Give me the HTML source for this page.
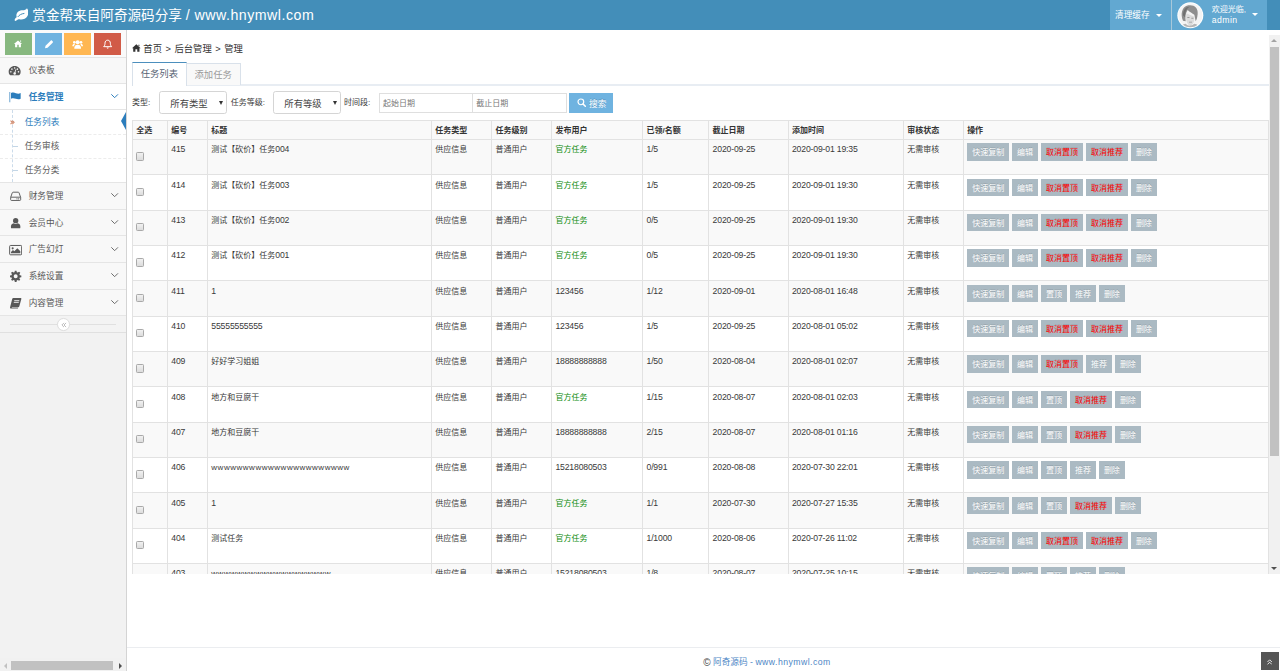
<!DOCTYPE html>
<html lang="zh-CN">
<head>
<meta charset="utf-8">
<title>赏金帮来自阿奇源码分享</title>
<style>
*{box-sizing:border-box}
html,body{margin:0;padding:0;background:#fff;overflow:hidden}
body{font-family:"Liberation Sans","Noto Sans CJK SC",sans-serif;font-size:13px;color:#393939;line-height:1.5}
#z{position:absolute;left:0;top:0;width:1920px;height:1007px;zoom:0.666667;overflow:hidden;background:#fff}
a{text-decoration:none;color:inherit}
svg{display:block}
/* navbar */
.navbar{position:absolute;left:0;top:0;width:1920px;height:45px;background:#438eb9}
.brand{position:absolute;left:20px;top:0;height:45px;line-height:45px;color:#fff;font-size:20.4px;white-space:nowrap}
.brand svg{position:absolute;left:0.5px;top:11.5px}
.brand span{position:absolute;left:28.500px;top:0}
.brand span i{font-style:normal;letter-spacing:.75px;font-size:21.300px}
.ace-nav{position:absolute;right:20px;top:0;height:45px;margin:0;padding:0;list-style:none;display:flex}
.ace-nav li{height:45px;line-height:45px;background:#62a8d1;color:#fff;position:relative;white-space:nowrap}
.ace-nav li+li{border-left:2.5px solid rgba(225,225,225,.55)}
.caret{display:inline-block;width:0;height:0;border-left:5px solid transparent;border-right:5px solid transparent;border-top:5.5px solid #fff;vertical-align:middle}
/* sidebar */
.sidebar{position:absolute;left:0;top:45px;width:190px;height:962px;background:#f2f2f2;border-right:1px solid #d4d4d4}
.shortcuts{height:40px;background:#fafafa;position:relative}
.shortcuts b{position:absolute;top:5px;width:40.8px;height:32px}
.shortcuts b svg{position:absolute;left:12px;top:8px}
.nav-list{margin:0;padding:0;list-style:none}
.nav-list>li{border-top:1px solid #e5e5e5;position:relative}
.nav-list>li>a{display:block;height:38.5px;line-height:39px;background:#f8f8f8;color:#585858;font-size:13px;position:relative;padding-left:43px}
.nav-list>li>a svg.mi{position:absolute;left:13px;top:11px}
.nav-list>li>a svg.ar{position:absolute;right:10px;top:14px}
.nav-list>li:first-child>a{height:37.5px;line-height:37px}
.nav-list>li:first-child>a svg.mi{top:10.5px;left:12px}
.nav-list>li.active>a{background:#fff;color:#2b7dbc;font-weight:bold}
.submenu{margin:0;padding:0;list-style:none;background:#fff;border-top:1px solid #e5e5e5;position:relative}
.submenu:before{content:"";position:absolute;left:18px;top:0;bottom:0;border-left:1px dashed #cbdbea}
.submenu li{position:relative}
.submenu li+li{border-top:1px dashed #ececec}
.submenu li a{display:block;padding:7.5px 0 8.5px 37px;color:#616161;line-height:19px;height:34.5px}
.submenu li:first-child a{height:35.5px;padding-top:9px}
.submenu li:before{content:"";position:absolute;left:20px;top:17px;width:7px;border-top:1px solid #c3d6e6}
.submenu li.active a{color:#2b7dbc}
.submenu li.active:before{display:none}
.tri{position:absolute;right:0;top:3px;width:0;height:0;border-top:14px solid transparent;border-bottom:14px solid transparent;border-right:8px solid #2b7dbc}
.toggle{border-top:1px solid #e5e5e5;border-bottom:1px solid #e0e0e0;background:#f3f3f3;height:24px;box-sizing:content-box;position:relative}
.toggle:before{content:"";position:absolute;left:15px;right:15px;top:12px;border-top:1px solid #e0e0e0}
.toggle i{position:absolute;left:85.5px;top:3px;width:19px;height:19px;border-radius:50%;border:1px solid #ddd;background:#fff}
.toggle i svg{position:absolute;left:4px;top:4px}
.hs{position:absolute;left:0;right:0;bottom:0;height:20px;background:#f1f1f1}
.hs u{position:absolute;left:17px;top:4px;width:153px;height:14px;background:#c1c1c1}
.hs:before{content:"";position:absolute;left:6px;top:7px;border-top:4.5px solid transparent;border-bottom:4.5px solid transparent;border-right:5px solid #c1c1c1}
.hs:after{content:"";position:absolute;right:6px;top:7px;border-top:4.5px solid transparent;border-bottom:4.5px solid transparent;border-left:5px solid #505050}
/* iframe */
.frame{position:absolute;left:191px;top:52px;width:1729px;height:809px;overflow:hidden;background:#fff}
.vs{position:absolute;right:0;top:0;width:17px;height:809px;background:#f1f1f1}
.vs u{position:absolute;left:2px;top:18.5px;width:13px;height:613px;background:#c1c1c1}
.vs:before{content:"";position:absolute;left:4px;top:6px;border-left:4.5px solid transparent;border-right:4.5px solid transparent;border-bottom:5px solid #a3a3a3}
.vs:after{content:"";position:absolute;left:4px;bottom:6px;border-left:4.5px solid transparent;border-right:4.5px solid transparent;border-top:5px solid #505050}
.bc{position:absolute;left:7px;top:11px;word-spacing:1.4px;font-size:14px;line-height:22px;color:#333;white-space:nowrap;padding-left:17px}
.bc svg{position:absolute;left:0;top:3.5px}
.tabs{position:absolute;left:7px;top:41px;right:17px;height:36.5px;border-bottom:3px solid #e8edf3}
.tabs a{position:absolute;top:0;height:35px;font-size:14px;text-align:center;white-space:nowrap}
.tabs a.on{left:0;width:82px;height:36.5px;background:#fff;border:1px solid #d9e1ea;border-top:2px solid #4c8fbd;border-bottom:0;color:#576373;line-height:34px}
.tabs a.off{left:82px;top:1px;width:81px;height:33px;background:#f9f9f9;border:1px solid #d9e1ea;border-left:0;border-bottom:0;color:#999;line-height:34px}
.flt{position:absolute;left:7px;top:85px;height:34px;white-space:nowrap}
.flt span{position:absolute;top:7px;font-size:12px;line-height:20px;color:#393939}
.sel{position:absolute;top:0;width:103px;height:34px;border:1px solid #d5d5d5;border-radius:4px;background:#fff;font-size:14px;color:#444;line-height:32px;padding:3px 0 0 16px}
.sel:after{content:"";position:absolute;right:5px;top:13px;border-left:3.5px solid transparent;border-right:3.5px solid transparent;border-top:7px solid #333}
.inp{position:absolute;top:2px;width:141px;height:30px;border:1px solid #dfdfdf;background:#fff;font-size:12px;color:#777;line-height:28px;padding:1.5px 0 0 5px}
.sbtn{position:absolute;top:2px;left:655px;width:66px;height:30px;background:#6fb3e0;color:#fff;font-size:13px;line-height:30px;padding:1.5px 0 0 30.500px;text-shadow:0 -1px 0 rgba(0,0,0,.18)}
.sbtn svg{position:absolute;left:12px;top:7.5px}
table{position:absolute;left:7px;top:128px;width:1705px;border-collapse:collapse;table-layout:fixed;font-size:12px;color:#393939}
th,td{border:1px solid #e2e2e2;padding:5px;text-align:left;vertical-align:top;line-height:20px;white-space:nowrap;overflow:hidden}
th{padding:6px 5px 2px;line-height:19px;height:28px;font-weight:bold;color:#333;background:#f9f9f9}
tbody tr{height:53px}
tbody tr:nth-child(odd) td{background:#f9f9f9}
td.c{vertical-align:middle}
td.g{color:#0c8c0c}
td.n,td span.n{font-size:13px;letter-spacing:-.25px}
td.w{letter-spacing:.78px}
.cb{display:block;width:12px;height:12.5px;border:1px solid #a9a9a9;border-radius:2px;background:linear-gradient(#f1f1f1,#dcdcdc);margin:-2px 0 0 -0.5px}
td.o{padding:5px 5px 0 5px;font-size:0}
.b{display:inline-block;height:26px;line-height:30px;overflow:hidden;padding:0 7.6px;margin-right:4.2px;background:#abbac3;color:#fff;font-size:12px;text-shadow:0 -1px 0 rgba(0,0,0,.15);vertical-align:top}
.b.r{color:#f00}
/* footer */
.footer{position:absolute;left:191px;top:970px;width:1729px;height:37px;border-top:1px solid #ebedf0;background:#fff}
.footer p{position:absolute;left:190px;right:0;top:0;margin:0;text-align:center;font-size:13px;line-height:44px;color:#4d86c5;white-space:nowrap}
.footer p em{font-style:normal;color:#444;font-size:15px;vertical-align:-1px}
.up{position:absolute;right:2px;bottom:2.5px;width:27px;height:26px;background:#4c4c4c;opacity:.95}
.up svg{position:absolute;left:9.500px;top:9.500px}
</style>
</head>
<body>
<div id="z">

<div class="navbar">
  <a class="brand"><svg width="22" height="20" viewBox="0 0 22 20"><path fill="#fff" d="M1 18.500c-.200-2 1.300-3.700 3-4.800C2 7.500 7.500 3.500 13 3.500c3 0 5-1 6.500-3.200 2.800 3.700 2.800 8.500.5 12-2.500 4-7.300 5.600-11.800 4.600-1.500-.300-2.500 0-3.500 1.200C3.700 19.300 1.200 20 1 18.500z"/><path fill="none" stroke="#438eb9" stroke-width="1.500" stroke-linecap="round" d="M6 13c2-2.700 5-4.300 9-4.800"/></svg><span>赏金帮来自阿奇源码分享 <i>/</i> <i style="margin-left:1px">www.hnymwl.com</i></span></a>
  <ul class="ace-nav">
    <li style="width:91.5px;padding-left:7px;font-size:13px">清理缓存<span class="caret" style="margin-left:9px"></span></li>
    <li style="width:143px"><svg style="position:absolute;left:7px;top:3px" width="40" height="40" viewBox="0 0 40 40"><defs><clipPath id="av"><circle cx="20" cy="20" r="18"/></clipPath><filter id="bl" x="-10%" y="-10%" width="120%" height="120%"><feGaussianBlur stdDeviation="0.9"/></filter></defs><circle cx="20" cy="20" r="19.500" fill="#fff"/><g clip-path="url(#av)"><rect width="40" height="40" fill="#f4f4f4"/><g filter="url(#bl)"><path fill="#8e8e8e" d="M9 28c-4-9-2-21 8-23 8-1.500 15 3 14 13-.400 4-1 8-3 11l-2-10c-3-2-7-4-10-7-3 4-4 10-3 17z"/><path fill="#dcdcdc" d="M14 17c3 1.500 8 3.500 12 5 .500 6-1.500 12-6 14-5-2-7.500-9-6-19z"/><path fill="#b5b5b5" d="M3 40c2-5 6-6.500 10-7.500 3 4 9 4 13 0 4 1 8 2.500 10 7.500z"/><path fill="#9a9a9a" d="M15.500 22.500h3.200v1.500h-3.200zM21.500 23.500h3.200v1.500h-3.200zM18 29.500h4.500v1.200H18z"/><path fill="#6f6f6f" d="M9 20c0-8 4-13 10-13-5 3-7 8-7 16z"/></g></g></svg><span style="position:absolute;left:59px;top:8px;line-height:15px;font-size:13px"><small style="display:block;font-size:12px">欢迎光临,</small><i style="font-style:normal;letter-spacing:.7px">admin</i></span><span class="caret" style="position:absolute;left:119px;top:20px"></span></li>
  </ul>
</div>

<div class="sidebar">
  <div class="shortcuts">
    <b style="left:7.2px;background:#87b87f"><svg style="left:13px;top:9px" width="15" height="14" viewBox="0 0 17 16"><path fill="#fff" d="M8.500 2.500L1.500 8.500h2V14h3.700v-4h2.600v4h3.700V8.500h2zM12 2.500h1.800v3l-1.800-1.600z"/></svg></b>
    <b style="left:52.2px;background:#6fb3e0"><svg width="17" height="16" viewBox="0 0 17 16"><path fill="#fff" d="M3 14l.800-3.800 7.700-7.700c.600-.600 1.400-.600 2 0l1 1c.600.600.600 1.400 0 2L6.800 13.200z"/></svg></b>
    <b style="left:96px;background:#ffb752"><svg width="17" height="16" viewBox="0 0 17 16"><circle cx="8.500" cy="5" r="3" fill="#fff"/><circle cx="3.500" cy="5" r="2" fill="#fff"/><circle cx="13.500" cy="5" r="2" fill="#fff"/><path fill="#fff" d="M3.500 14.500c-.500-3.500 1.500-6 5-6s5.500 2.500 5 6zM.500 11c0-2.500 1-4 3-4l1 1c-1 1-1.500 2-1.500 3zM16.500 11c0-2.500-1-4-3-4l-1 1c1 1 1.500 2 1.500 3z"/></svg></b>
    <b style="left:141px;background:#d15b47"><svg width="17" height="16" viewBox="0 0 17 16"><path fill="none" stroke="#fff" stroke-width="1.500" d="M8.500 1.800c-2.700 0-4 2-4 4.500 0 2.500-.700 4-2 5.200h12c-1.300-1.200-2-2.700-2-5.200 0-2.500-1.300-4.500-4-4.500z"/><path fill="#fff" d="M7 12.800h3c0 1-.700 1.700-1.500 1.700S7 13.800 7 12.800z"/></svg></b>
  </div>
  <ul class="nav-list">
    <li><a><svg class="mi" width="20" height="18" viewBox="0 0 20 18"><path fill="#585858" d="M10 1.500c-5 0-9 3.800-9 8.500 0 1.800.500 3.400 1.500 4.800.200.400.600.700 1 .700h13c.400 0 .800-.300 1-.700 1-1.400 1.500-3 1.500-4.800 0-4.700-4-8.500-9-8.500z"/><circle cx="4.300" cy="10.300" r="1.150" fill="#f8f8f8"/><circle cx="5.900" cy="6.200" r="1.150" fill="#f8f8f8"/><circle cx="10" cy="4.400" r="1.150" fill="#f8f8f8"/><circle cx="14.100" cy="6.200" r="1.150" fill="#f8f8f8"/><circle cx="15.700" cy="10.300" r="1.150" fill="#f8f8f8"/><path stroke="#f8f8f8" stroke-width="1.300" stroke-linecap="round" d="M10 12.600l1.700-5.600"/><circle cx="10" cy="12.800" r="1.900" fill="#f8f8f8"/></svg>仪表板</a></li>
    <li class="active"><a><svg class="mi" width="20" height="18" viewBox="0 0 20 18"><path fill="#2b7dbc" opacity=".75" d="M.500 1.500h1.400v15.500H.500z"/><path fill="#2b7dbc" d="M3 3c2.800-1.200 5-.700 7.300.200s4.500 1.200 7.200-.200v8.500c-2.700 1.400-5 1.100-7.200.200S5.800 10.300 3 11.500z"/></svg>任务管理<svg class="ar" width="14" height="10" viewBox="0 0 14 10"><path fill="none" stroke="#2b7dbc" stroke-width="1.500" d="M2 2l5 5 5-5"/></svg></a>
      <ul class="submenu">
        <li class="active"><a><svg style="position:absolute;left:15px;top:14.5px" width="7" height="7" viewBox="0 0 9 9"><path fill="none" stroke="#d28a6c" stroke-width="2" d="M1 1l3.500 3.500L1 8M4.500 1L8 4.500 4.500 8"/></svg>任务列表</a><span class="tri"></span></li>
        <li><a>任务审核</a></li>
        <li><a>任务分类</a></li>
      </ul>
    </li>
    <li><a><svg class="mi" width="20" height="18" viewBox="0 0 20 18"><path fill="none" stroke="#585858" stroke-width="1.400" d="M2.500 11.200l2.400-7c.200-.500.600-.900 1.200-.900h7.800c.600 0 1 .400 1.200.900l2.400 7v3.300c0 .700-.500 1.200-1.200 1.200H3.700c-.700 0-1.200-.500-1.200-1.200zM2.500 10.800h15"/><circle cx="14.500" cy="13.300" r=".900" fill="#585858"/><circle cx="12" cy="13.300" r=".900" fill="#585858"/></svg>财务管理<svg class="ar" width="14" height="10" viewBox="0 0 14 10"><path fill="none" stroke="#6a6a6a" stroke-width="1.500" d="M2 2l5 5 5-5"/></svg></a></li>
    <li><a><svg class="mi" width="20" height="18" viewBox="0 0 20 18"><circle cx="10" cy="5.500" r="4" fill="#585858"/><path fill="#585858" d="M3 16.500c-.800-4.500 1.500-7 4-7.200 1.800 1.400 4.200 1.400 6 0 2.500.200 4.800 2.700 4 7.200-.200.500-.600.500-1 .500H4c-.400 0-.800 0-1-.500z"/></svg>会员中心<svg class="ar" width="14" height="10" viewBox="0 0 14 10"><path fill="none" stroke="#6a6a6a" stroke-width="1.500" d="M2 2l5 5 5-5"/></svg></a></li>
    <li><a><svg class="mi" width="20" height="18" viewBox="0 0 20 18"><rect x="1" y="2.200" width="18" height="14" rx="1.300" fill="none" stroke="#585858" stroke-width="1.500"/><circle cx="5.500" cy="6.500" r="1.600" fill="#585858"/><path fill="#585858" d="M3 14v-2l3-3 2 2 4.500-4.500L17 11v3z"/></svg>广告幻灯<svg class="ar" width="14" height="10" viewBox="0 0 14 10"><path fill="none" stroke="#6a6a6a" stroke-width="1.500" d="M2 2l5 5 5-5"/></svg></a></li>
    <li><a><svg class="mi" width="20" height="18" viewBox="0 0 20 18"><path fill="#585858" fill-rule="evenodd" d="M8.700 1h2.600l.400 2.200 1.500.600 1.900-1.300 1.800 1.800-1.300 1.900.600 1.500 2.300.400v2.600l-2.300.400-.600 1.500 1.300 1.900-1.800 1.800-1.900-1.300-1.500.600-.400 2.300H8.700l-.400-2.300-1.500-.600-1.900 1.300-1.800-1.800 1.300-1.900-.600-1.500L1.500 10.700V8.100l2.300-.400.600-1.500-1.300-1.900 1.800-1.800 1.900 1.300 1.500-.600zM10 6.500a3 3 0 1 0 0 6 3 3 0 0 0 0-6z"/></svg>系统设置<svg class="ar" width="14" height="10" viewBox="0 0 14 10"><path fill="none" stroke="#6a6a6a" stroke-width="1.500" d="M2 2l5 5 5-5"/></svg></a></li>
    <li><a><svg class="mi" width="20" height="18" viewBox="0 0 20 18"><path fill="#585858" d="M6.500 1.500h11c.800 0 1.200.600 1 1.400l-3 11c-.200.800-.900 1.400-1.700 1.400H4.500l-.400 1h9.700l-.500 1H3c-1 0-1.700-.900-1.400-1.900l3.200-12.400c.200-.900.900-1.500 1.700-1.500z"/><path fill="#f8f8f8" d="M8 5h7.500l-.300 1.200H7.700zM7.300 7.700h7.500l-.300 1.200H7z"/></svg>内容管理<svg class="ar" width="14" height="10" viewBox="0 0 14 10"><path fill="none" stroke="#6a6a6a" stroke-width="1.500" d="M2 2l5 5 5-5"/></svg></a></li>
  </ul>
  <div class="toggle"><i><svg width="9" height="9" viewBox="0 0 10 10"><path fill="none" stroke="#aaa" stroke-width="1.300" d="M5 1.500L1.500 5 5 8.500M8.500 1.500L5 5l3.500 3.500"/></svg></i></div>
  <div class="hs"><u></u></div>
</div>

<div class="frame">
  <div class="bc"><svg width="13" height="12" viewBox="0 0 13 12"><path fill="#333" d="M6.500 0.500L0 6.300h1.800V11.500h3.300V7.800h2.800v3.700h3.300V6.300H13zM9.500 1h1.600v2.600L9.500 2.200z"/></svg>首页 &gt; 后台管理 &gt; 管理</div>
  <div class="tabs"><a class="on">任务列表</a><a class="off">添加任务</a></div>
  <div class="flt">
    <span style="left:0">类型:</span>
    <div class="sel" style="left:40px">所有类型</div>
    <span style="left:148px">任务等级:</span>
    <div class="sel" style="left:211px">所有等级</div>
    <span style="left:318px">时间段:</span>
    <div class="inp" style="left:370px">起始日期</div>
    <div class="inp" style="left:510px;width:142px">截止日期</div>
    <a class="sbtn"><svg width="14" height="14" viewBox="0 0 14 14"><circle cx="5.800" cy="5.800" r="4.300" fill="none" stroke="#fff" stroke-width="1.800"/><path stroke="#fff" stroke-width="2.200" stroke-linecap="round" d="M9.200 9.200l3.300 3.300"/></svg>搜索</a>
  </div>
  <table>
    <colgroup><col style="width:52.500px"><col style="width:60px"><col style="width:336px"><col style="width:90.300px"><col style="width:89.900px"><col style="width:136.600px"><col style="width:99.200px"><col style="width:119px"><col style="width:173px"><col style="width:89.800px"><col></colgroup>
    <thead><tr><th>全选</th><th>编号</th><th>标题</th><th>任务类型</th><th>任务级别</th><th>发布用户</th><th>已领/名额</th><th>截止日期</th><th>添加时间</th><th>审核状态</th><th>操作</th></tr></thead>
    <tbody>
<tr><td class="c"><i class="cb"></i></td><td class="n">415</td><td>测试【砍价】任务<span class="n">004</span></td><td>供应信息</td><td>普通用户</td><td class="g">官方任务</td><td class="n">1/5</td><td class="n">2020-09-25</td><td class="n">2020-09-01 19:35</td><td>无需审核</td><td class="o"><a class="b">快速复制</a> <a class="b">编辑</a> <a class="b r">取消置顶</a> <a class="b r">取消推荐</a> <a class="b">删除</a></td></tr>
<tr><td class="c"><i class="cb"></i></td><td class="n">414</td><td>测试【砍价】任务<span class="n">003</span></td><td>供应信息</td><td>普通用户</td><td class="g">官方任务</td><td class="n">1/5</td><td class="n">2020-09-25</td><td class="n">2020-09-01 19:30</td><td>无需审核</td><td class="o"><a class="b">快速复制</a> <a class="b">编辑</a> <a class="b r">取消置顶</a> <a class="b r">取消推荐</a> <a class="b">删除</a></td></tr>
<tr><td class="c"><i class="cb"></i></td><td class="n">413</td><td>测试【砍价】任务<span class="n">002</span></td><td>供应信息</td><td>普通用户</td><td class="g">官方任务</td><td class="n">0/5</td><td class="n">2020-09-25</td><td class="n">2020-09-01 19:30</td><td>无需审核</td><td class="o"><a class="b">快速复制</a> <a class="b">编辑</a> <a class="b r">取消置顶</a> <a class="b r">取消推荐</a> <a class="b">删除</a></td></tr>
<tr><td class="c"><i class="cb"></i></td><td class="n">412</td><td>测试【砍价】任务<span class="n">001</span></td><td>供应信息</td><td>普通用户</td><td class="g">官方任务</td><td class="n">0/5</td><td class="n">2020-09-25</td><td class="n">2020-09-01 19:30</td><td>无需审核</td><td class="o"><a class="b">快速复制</a> <a class="b">编辑</a> <a class="b r">取消置顶</a> <a class="b r">取消推荐</a> <a class="b">删除</a></td></tr>
<tr><td class="c"><i class="cb"></i></td><td class="n">411</td><td class="n">1</td><td>供应信息</td><td>普通用户</td><td class="n">123456</td><td class="n">1/12</td><td class="n">2020-09-01</td><td class="n">2020-08-01 16:48</td><td>无需审核</td><td class="o"><a class="b">快速复制</a> <a class="b">编辑</a> <a class="b">置顶</a> <a class="b">推荐</a> <a class="b">删除</a></td></tr>
<tr><td class="c"><i class="cb"></i></td><td class="n">410</td><td class="n">55555555555</td><td>供应信息</td><td>普通用户</td><td class="n">123456</td><td class="n">1/5</td><td class="n">2020-09-25</td><td class="n">2020-08-01 05:02</td><td>无需审核</td><td class="o"><a class="b">快速复制</a> <a class="b">编辑</a> <a class="b r">取消置顶</a> <a class="b r">取消推荐</a> <a class="b">删除</a></td></tr>
<tr><td class="c"><i class="cb"></i></td><td class="n">409</td><td>好好学习姐姐</td><td>供应信息</td><td>普通用户</td><td class="n">18888888888</td><td class="n">1/50</td><td class="n">2020-08-04</td><td class="n">2020-08-01 02:07</td><td>无需审核</td><td class="o"><a class="b">快速复制</a> <a class="b">编辑</a> <a class="b r">取消置顶</a> <a class="b">推荐</a> <a class="b">删除</a></td></tr>
<tr><td class="c"><i class="cb"></i></td><td class="n">408</td><td>地方和豆腐干</td><td>供应信息</td><td>普通用户</td><td class="g">官方任务</td><td class="n">1/15</td><td class="n">2020-08-07</td><td class="n">2020-08-01 02:03</td><td>无需审核</td><td class="o"><a class="b">快速复制</a> <a class="b">编辑</a> <a class="b">置顶</a> <a class="b r">取消推荐</a> <a class="b">删除</a></td></tr>
<tr><td class="c"><i class="cb"></i></td><td class="n">407</td><td>地方和豆腐干</td><td>供应信息</td><td>普通用户</td><td class="n">18888888888</td><td class="n">2/15</td><td class="n">2020-08-07</td><td class="n">2020-08-01 01:16</td><td>无需审核</td><td class="o"><a class="b">快速复制</a> <a class="b">编辑</a> <a class="b">置顶</a> <a class="b r">取消推荐</a> <a class="b">删除</a></td></tr>
<tr><td class="c"><i class="cb"></i></td><td class="n">406</td><td class="w">wwwwwwwwwwwwwwwwwwwwww</td><td>供应信息</td><td>普通用户</td><td class="n">15218080503</td><td class="n">0/991</td><td class="n">2020-08-08</td><td class="n">2020-07-30 22:01</td><td>无需审核</td><td class="o"><a class="b">快速复制</a> <a class="b">编辑</a> <a class="b">置顶</a> <a class="b">推荐</a> <a class="b">删除</a></td></tr>
<tr><td class="c"><i class="cb"></i></td><td class="n">405</td><td class="n">1</td><td>供应信息</td><td>普通用户</td><td class="g">官方任务</td><td class="n">1/1</td><td class="n">2020-07-30</td><td class="n">2020-07-27 15:35</td><td>无需审核</td><td class="o"><a class="b">快速复制</a> <a class="b">编辑</a> <a class="b">置顶</a> <a class="b r">取消推荐</a> <a class="b">删除</a></td></tr>
<tr><td class="c"><i class="cb"></i></td><td class="n">404</td><td>测试任务</td><td>供应信息</td><td>普通用户</td><td class="g">官方任务</td><td class="n">1/1000</td><td class="n">2020-08-06</td><td class="n">2020-07-26 11:02</td><td>无需审核</td><td class="o"><a class="b">快速复制</a> <a class="b">编辑</a> <a class="b r">取消置顶</a> <a class="b r">取消推荐</a> <a class="b">删除</a></td></tr>
<tr><td class="c"><i class="cb"></i></td><td class="n">403</td><td class="w">wwwwwwwwwwwwwwwwwww</td><td>供应信息</td><td>普通用户</td><td class="n">15218080503</td><td class="n">1/8</td><td class="n">2020-08-07</td><td class="n">2020-07-25 10:15</td><td>无需审核</td><td class="o"><a class="b">快速复制</a> <a class="b">编辑</a> <a class="b">置顶</a> <a class="b">推荐</a> <a class="b">删除</a></td></tr>
<tr><td class="c"><i class="cb"></i></td><td class="n">402</td><td>测试</td><td>供应信息</td><td>普通用户</td><td class="g">官方任务</td><td class="n">1/8</td><td class="n">2020-08-07</td><td class="n">2020-07-25 10:10</td><td>无需审核</td><td class="o"><a class="b">快速复制</a> <a class="b">编辑</a> <a class="b">置顶</a> <a class="b">推荐</a> <a class="b">删除</a></td></tr>
    </tbody>
  </table>
  <div class="vs"><u></u></div>
</div>

<div class="footer"><p><em>©</em> 阿奇源码 - <i style="font-style:normal;letter-spacing:.7px">www.hnymwl.com</i></p></div>
<a class="up"><svg width="8" height="9" viewBox="0 0 11 12"><path fill="none" stroke="#fff" stroke-width="1.800" d="M1 6l4.500-4.500L10 6M1 11l4.500-4.500L10 11"/></svg></a>

</div>
</body>
</html>
